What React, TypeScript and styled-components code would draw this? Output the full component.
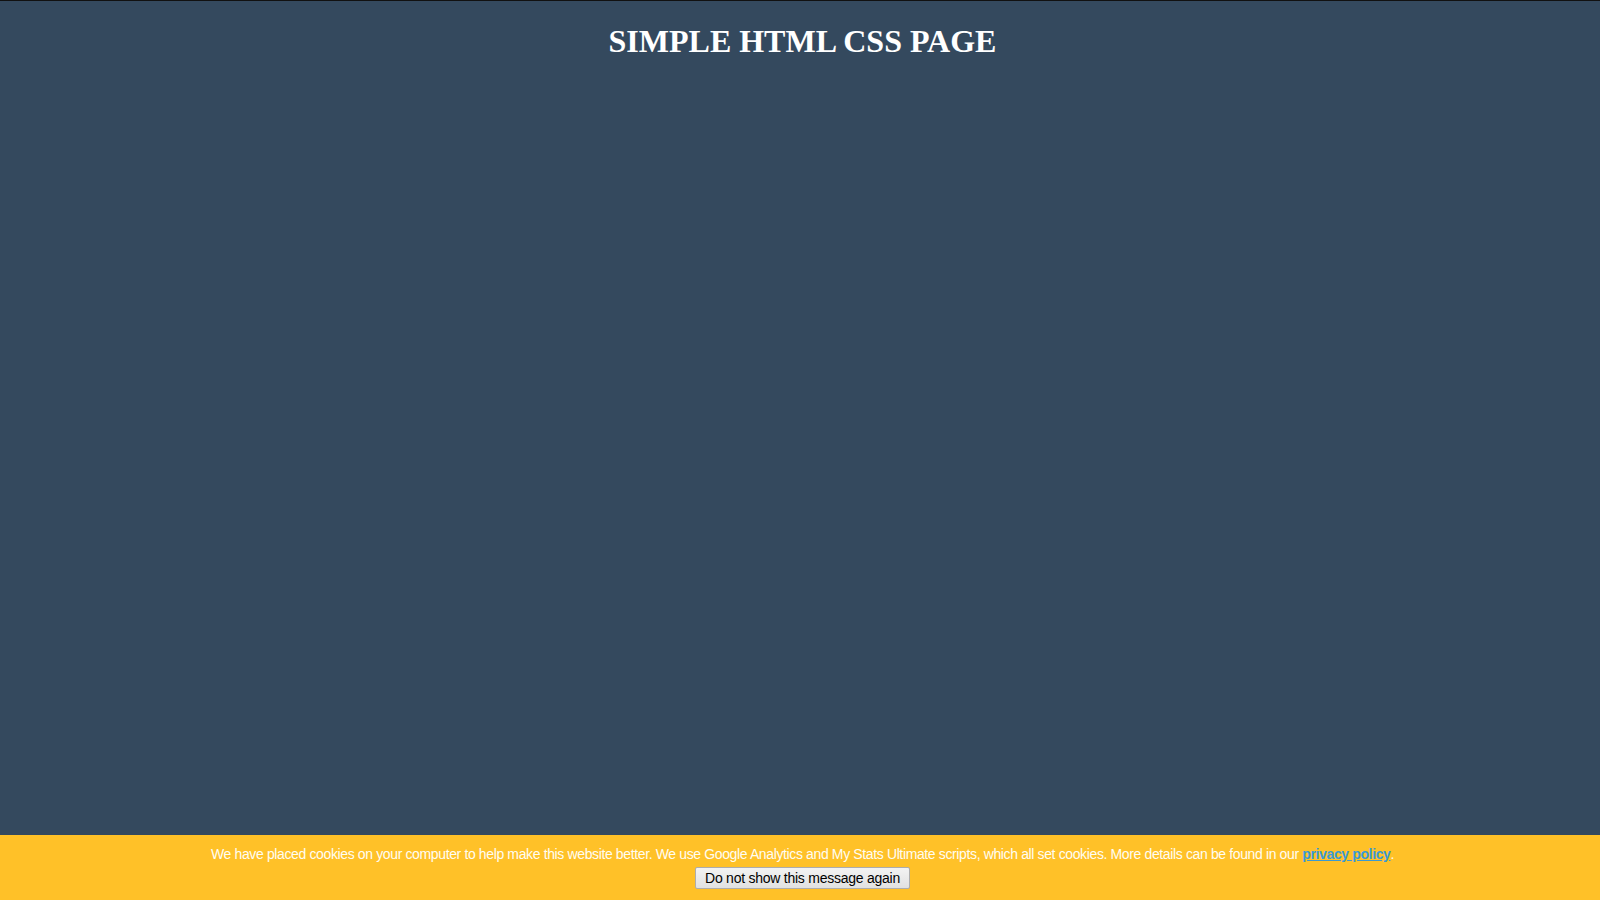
import React from "react";
import styled, { createGlobalStyle } from "styled-components";

const GlobalStyle = createGlobalStyle`
  html, body {
    margin: 0;
    padding: 0;
    background: #34495e;
  }
  body {
    border-top: 1px solid #111;
  }
`;

const Page = styled.div`
  min-height: calc(100vh - 1px);
  display: flex;
  flex-direction: column;
  background: #34495e;
`;

const Main = styled.main`
  flex: 1;
  padding-left: 5px;
`;

const Title = styled.h1`
  margin: 22px 0 20px;
  text-align: center;
  font-family: "Liberation Serif", "Times New Roman", serif;
  font-weight: bold;
  font-size: 32px;
  color: #ffffff;
`;

const CookieBar = styled.div`
  height: 65px;
  box-sizing: border-box;
  background: #ffc128;
  padding: 11px 0 0 5px;
  display: flex;
  flex-direction: column;
  align-items: center;
  gap: 5px;
  font-family: "Liberation Sans", Arial, sans-serif;
  font-size: 14px;
`;

const CookieText = styled.p`
  margin: 0;
  color: #fffdf2;
  line-height: 16px;
  letter-spacing: -0.37px;
  text-align: center;
`;

const PolicyLink = styled.a`
  color: #3a9ad3;
  font-weight: bold;
  text-decoration: underline;
`;

const DismissButton = styled.button`
  height: 22px;
  padding: 0 9px;
  font-family: "Liberation Sans", Arial, sans-serif;
  font-size: 14px;
  letter-spacing: -0.25px;
  color: #000;
  background: linear-gradient(#f3f3f3, #e1e1e1);
  border: 1px solid #adadad;
  border-radius: 2px;
  line-height: 20px;
  cursor: pointer;
`;

export default function App() {
  return (
    <>
      <GlobalStyle />
      <Page>
        <Main>
          <Title>SIMPLE HTML CSS PAGE</Title>
        </Main>
        <CookieBar>
          <CookieText>
            We have placed cookies on your computer to help make this website better. We use Google Analytics and My
            Stats Ultimate scripts, which all set cookies. More details can be found in our{" "}
            <PolicyLink href="#">privacy policy</PolicyLink>.
          </CookieText>
          <DismissButton>Do not show this message again</DismissButton>
        </CookieBar>
      </Page>
    </>
  );
}
